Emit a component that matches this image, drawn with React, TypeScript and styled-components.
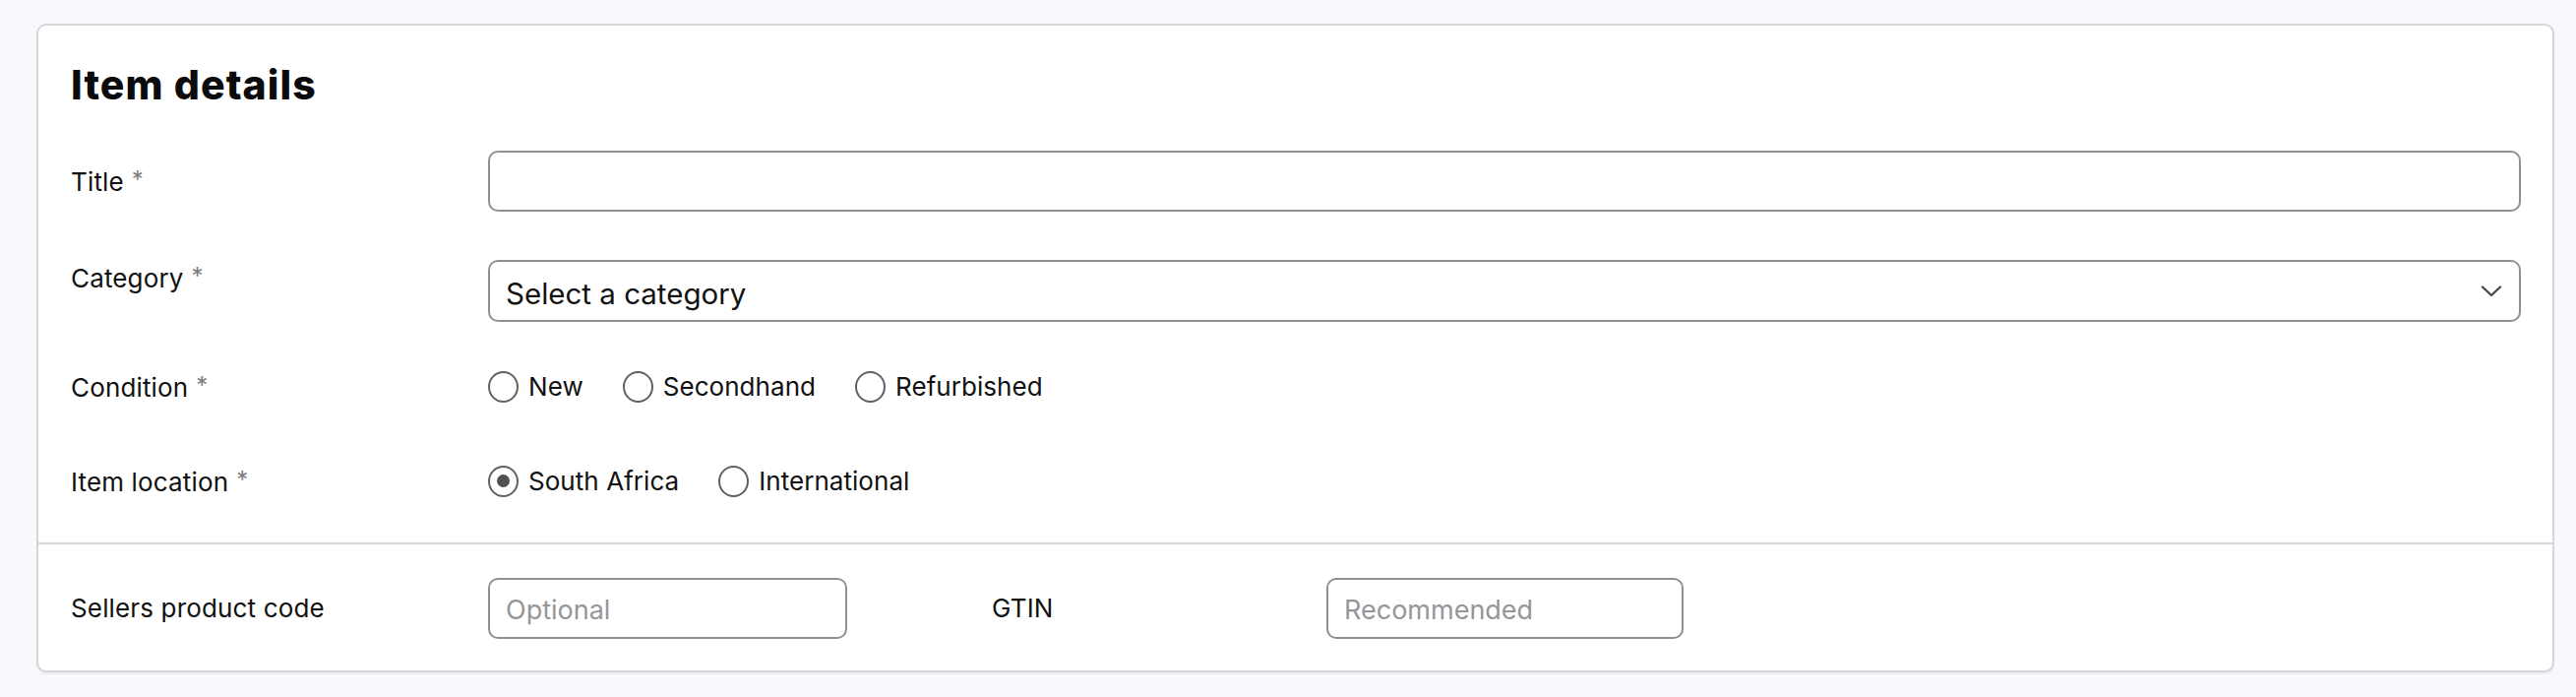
import React from "react";
import styled, { createGlobalStyle } from "styled-components";

const GlobalStyle = createGlobalStyle`
  html, body {
    margin: 0;
    padding: 0;
    background: #f8f9fd;
  }
  body {
    font-family: Inter, "Liberation Sans", sans-serif;
    color: #111;
  }
  * { box-sizing: border-box; }
`;

const Page = styled.div`
  padding: 24px 22px 24px 37px;
`;

const Card = styled.section`
  background: #fff;
  border: 2px solid #d5d6da;
  border-radius: 10px;
  box-shadow: 0 2px 2px rgba(0, 0, 0, 0.06);
`;

const Main = styled.div`
  display: flex;
  flex-direction: column;
  padding: 36px 32px 46px 33px;
`;

const Heading = styled.h2`
  margin: 0 0 42px;
  font-family: Inter, "Liberation Sans", sans-serif;
  font-weight: 800;
  font-size: 41px;
  line-height: 1.2;
  letter-spacing: 1.1px;
  color: #0b0b0b;
`;

const Row = styled.div<{ $align?: "center" | "start"; $mt?: number }>`
  display: grid;
  grid-template-columns: 424px 1fr;
  align-items: ${(p) => (p.$align === "start" ? "start" : "center")};
  margin-top: ${(p) => p.$mt ?? 0}px;
`;

const Label = styled.label<{ $pt?: number }>`
  font-size: 26px;
  line-height: 1.21;
  letter-spacing: 0.15px;
  color: #111;
  padding-top: ${(p) => p.$pt ?? 0}px;
  white-space: nowrap;
`;

const Req = styled.span`
  color: #7b7b7b;
  font-size: 24px;
  margin-left: 8px;
  vertical-align: 3px;
`;

const TextInput = styled.input<{ $width?: number }>`
  display: block;
  width: ${(p) => (p.$width ? `${p.$width}px` : "100%")};
  height: 62px;
  border: 2px solid #8f9093;
  border-radius: 10px;
  padding: 3px 16px 0;
  font-family: Inter, "Liberation Sans", sans-serif;
  font-size: 27px;
  color: #111;
  background: #fff;
  outline: none;
  &::placeholder {
    color: #95969a;
  }
`;

const SelectBox = styled.div`
  display: flex;
  align-items: center;
  justify-content: space-between;
  height: 63px;
  border: 2px solid #8f9093;
  border-radius: 10px;
  padding: 4px 17px 0 16px;
  font-size: 29.5px;
  color: #111;
  background: #fff;
  cursor: pointer;
`;

const Chevron = styled.svg`
  width: 22px;
  height: 14px;
  flex: none;
  margin-top: -4px;
`;

const RadioGroup = styled.div`
  display: flex;
  align-items: center;
  gap: 40px;
`;

const RadioOption = styled.label`
  display: flex;
  align-items: center;
  gap: 10px;
  font-size: 26px;
  line-height: 32px;
  letter-spacing: 0.05px;
  color: #111;
  cursor: pointer;
  white-space: nowrap;
`;

const RadioCircle = styled.span<{ $checked?: boolean }>`
  width: 31px;
  height: 32px;
  border: 2.5px solid #5f6063;
  border-radius: 50%;
  display: flex;
  align-items: center;
  justify-content: center;
  flex: none;
  &::after {
    content: "";
    width: 13px;
    height: 13px;
    border-radius: 50%;
    background: #4f5053;
    display: ${(p) => (p.$checked ? "block" : "none")};
  }
`;

const Divider = styled.hr`
  margin: 0;
  border: none;
  height: 2px;
  background: #d5d6da;
`;

const Footer = styled.div`
  display: grid;
  grid-template-columns: 424px 365px 147px 340px 363px;
  align-items: center;
  padding: 34px 32px 32px 33px;
`;

const Spacer = styled.span``;

type Opt = { label: string; checked?: boolean };

const Radios = ({ options }: { options: Opt[] }) => (
  <RadioGroup>
    {options.map((o) => (
      <RadioOption key={o.label}>
        <RadioCircle $checked={o.checked} />
        {o.label}
      </RadioOption>
    ))}
  </RadioGroup>
);

export default function App() {
  return (
    <>
      <GlobalStyle />
      <Page>
        <Card>
          <Main>
            <Heading>Item details</Heading>
            <Row>
              <Label>
                Title<Req>*</Req>
              </Label>
              <TextInput type="text" />
            </Row>
            <Row $align="start" $mt={49}>
              <Label $pt={2}>
                Category<Req>*</Req>
              </Label>
              <SelectBox>
                <span>Select a category</span>
                <Chevron viewBox="0 0 22 14">
                  <polyline
                    points="2,2.5 11,11 20,2.5"
                    fill="none"
                    stroke="#4a4b4e"
                    strokeWidth="2.4"
                    strokeLinecap="round"
                    strokeLinejoin="round"
                  />
                </Chevron>
              </SelectBox>
            </Row>
            <Row $mt={50}>
              <Label>
                Condition<Req>*</Req>
              </Label>
              <Radios
                options={[
                  { label: "New" },
                  { label: "Secondhand" },
                  { label: "Refurbished" },
                ]}
              />
            </Row>
            <Row $mt={63}>
              <Label>
                Item location<Req>*</Req>
              </Label>
              <Radios
                options={[
                  { label: "South Africa", checked: true },
                  { label: "International" },
                ]}
              />
            </Row>
          </Main>
          <Divider />
          <Footer>
            <Label>Sellers product code</Label>
            <TextInput type="text" placeholder="Optional" />
            <Spacer />
            <Label>GTIN</Label>
            <TextInput type="text" placeholder="Recommended" />
          </Footer>
        </Card>
      </Page>
    </>
  );
}
